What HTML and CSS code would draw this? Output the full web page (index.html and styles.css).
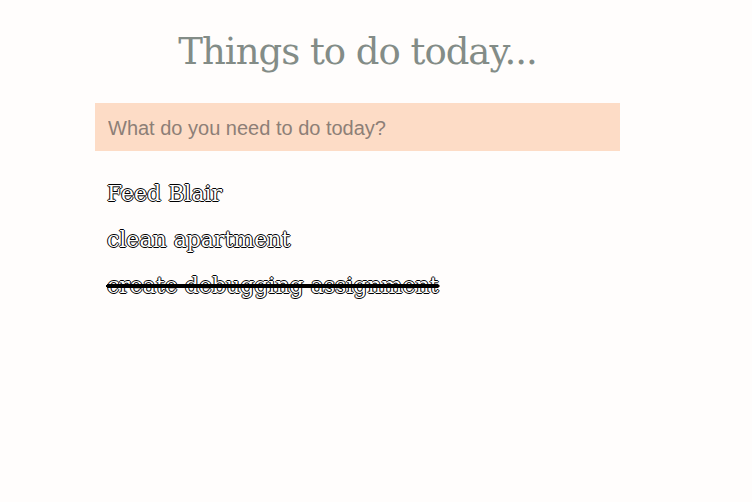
FILE: index.html
```html
<!DOCTYPE html>
<html>
<head>
<meta charset="utf-8">
<link rel="stylesheet" href="styles.css">
</head>
<body>
<div class="app">
  <h1 class="title">Things to do today...</h1>
  <input class="new-todo" type="text" placeholder="What do you need to do today?">
  <ul class="todo-list">
    <li class="todo">Feed Blair</li>
    <li class="todo">clean apartment</li>
    <li class="todo done">create debugging assignment</li>
  </ul>
</div>
</body>
</html>
```

FILE: styles.css
```css
html, body {
  margin: 0;
  padding: 0;
  background: #fffdfc;
}
.app {
  width: 525px;
  margin-left: 95px;
  display: flex;
  flex-direction: column;
}
.title {
  margin: 27px 0 0;
  height: 76px;
  text-align: center;
  font-family: "DejaVu Serif", serif;
  font-weight: normal;
  font-size: 37px;
  line-height: 50px;
  color: #838c87;
  letter-spacing: -1px;
}
.new-todo {
  box-sizing: border-box;
  height: 48px;
  width: 525px;
  border: none;
  outline: none;
  background: #fddcc6;
  padding: 2px 13px 0;
  font-family: "Liberation Sans", sans-serif;
  font-size: 20px;
  color: #333;
}
.new-todo::placeholder {
  color: #8d7f77;
}
.todo-list {
  list-style: none;
  margin: 20px 0 0;
  padding: 0 0 0 12px;
  display: flex;
  flex-direction: column;
}
.todo {
  font-family: "DejaVu Serif", serif;
  font-size: 22px;
  line-height: 46px;
  height: 46px;
  color: #fff;
  text-shadow: 1px 0 0 #000, -1px 0 0 #000, 0 1px 0 #000, 0 -1px 0 #000;
  letter-spacing: 0;
}
.todo.done {
  text-decoration: line-through;
  text-decoration-color: #000;
  text-decoration-thickness: 2px;
}
```
